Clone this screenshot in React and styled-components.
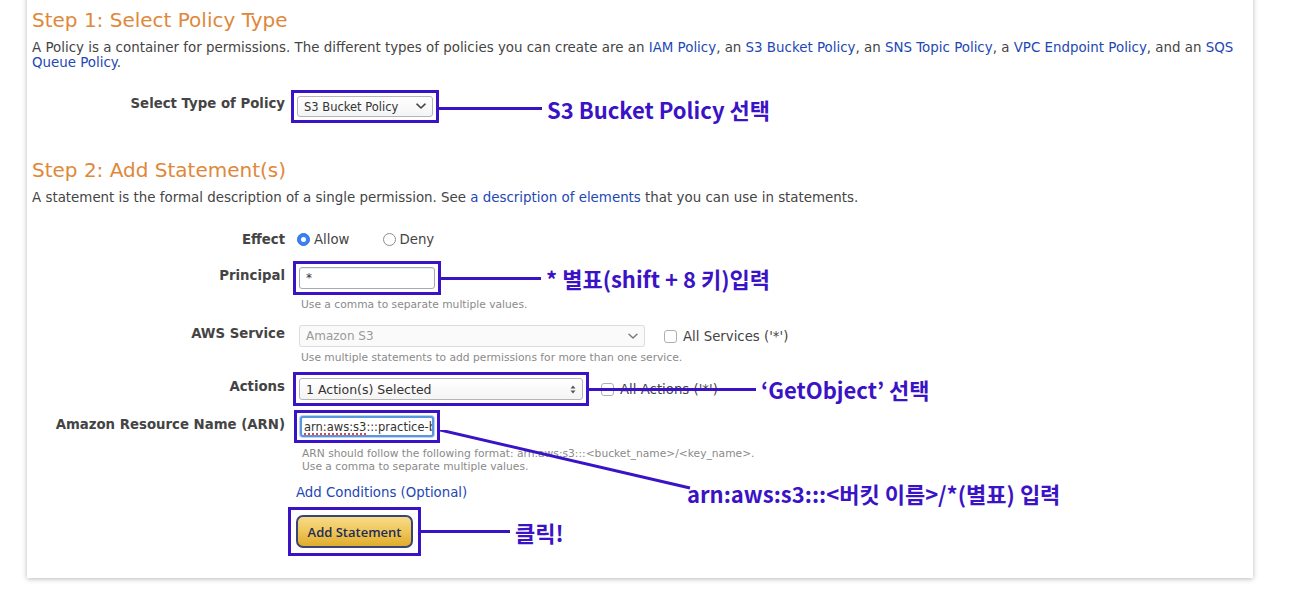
import React from "react";
import styled, { createGlobalStyle } from "styled-components";

const PURPLE = "#3b13c6";

const Global = createGlobalStyle`
  html, body { margin: 0; padding: 0; background: #ffffff; }
  body { font-family: "DejaVu Sans", Verdana, sans-serif; color: #444; overflow: hidden; }
`;

const Page = styled.div`
  width: 1308px;
  height: 600px;
  padding-left: 27px;
  box-sizing: border-box;
  overflow: hidden;
`;

const Card = styled.div`
  width: 1226px;
  margin-top: -20px;
  padding: 28px 5px 30px 5px;
  box-sizing: border-box;
  background: #fff;
  box-shadow: 0 1px 5px rgba(0, 0, 0, 0.28);
`;

const StepTitle = styled.h2`
  margin: ${(p) => p.$mt || 0}px 0 0;
  font-size: 20px;
  line-height: 24px;
  font-weight: normal;
  color: #e0883a;
`;

const Para = styled.p`
  margin: 8px 0 0;
  font-size: 13.4px;
  line-height: 15px;
  color: #444;
`;

const Link = styled.a`
  color: #1e47b4;
  text-decoration: none;
`;

const Form = styled.div`
  display: flex;
  flex-direction: column;
  margin-top: ${(p) => p.$mt}px;
`;

const Row = styled.div`
  display: grid;
  grid-template-columns: 253px 1fr;
  column-gap: ${(p) => p.$gap ?? 12}px;
  margin-top: ${(p) => p.$mt || 0}px;
`;

const Label = styled.div`
  text-align: right;
  font-weight: bold;
  font-size: 13.3px;
  line-height: 15px;
  padding-top: ${(p) => p.$pt ?? 1}px;
  color: #444;
`;

const Control = styled.div`
  display: flex;
  flex-direction: column;
  align-items: flex-start;
`;

const Inline = styled.div`
  display: flex;
  align-items: center;
`;

const Hint = styled.div`
  font-size: 10.7px;
  line-height: 13px;
  color: #8a8a8a;
  margin-top: ${(p) => p.$mt || 0}px;
  margin-left: 2px;
`;

const Highlight = styled.div`
  position: relative;
  display: inline-flex;
  outline: 3px solid ${PURPLE};
  outline-offset: ${(p) => p.$off ?? 3}px;
`;

const Callout = styled.div`
  position: absolute;
  left: calc(100% + ${(p) => p.$from}px);
  top: calc(50% + ${(p) => p.$dy || 0}px);
  display: flex;
  align-items: center;
  transform: translateY(-50%);
  pointer-events: none;
  z-index: 2;
`;

const Connector = styled.div`
  width: ${(p) => p.$w}px;
  height: 3px;
  background: ${PURPLE};
`;

const Note = styled.span`
  margin-left: 5px;
  font-family: "Noto Sans CJK KR", "Noto Sans", sans-serif;
  font-weight: 700;
  font-size: 22px;
  line-height: 26px;
  color: ${PURPLE};
  white-space: nowrap;
`;

const DiagWrap = styled.div`
  position: absolute;
  left: calc(100% + 6px);
  top: 14px;
  width: 252px;
  height: 62px;
  pointer-events: none;
  z-index: 2;
`;

const DiagNote = styled(Note)`
  position: absolute;
  left: 247px;
  top: 50px;
  margin: 0;
`;

const SelectBox = styled.div`
  box-sizing: border-box;
  width: ${(p) => p.$w}px;
  height: ${(p) => p.$h || 22}px;
  display: flex;
  align-items: center;
  justify-content: space-between;
  padding: 0 6px 0 6px;
  border: 1px solid ${(p) => (p.$disabled ? "#dcdcdc" : "#b5b5b5")};
  border-radius: 3px;
  background: ${(p) => (p.$disabled ? "#fafafa" : "linear-gradient(#ffffff, #f4f4f4)")};
  font-size: ${(p) => p.$fs || 12}px;
  color: ${(p) => (p.$disabled ? "#9a9a9a" : "#333")};
`;

const TextInput = styled.div`
  box-sizing: border-box;
  width: ${(p) => p.$w}px;
  height: ${(p) => p.$h || 22}px;
  display: flex;
  align-items: center;
  padding: 0 ${(p) => (p.$focus ? 2 : 6)}px;
  border: ${(p) => (p.$focus ? "2px solid #5b95e0" : "1px solid #a9a9a9")};
  border-radius: 3px;
  background: #fff;
  font-size: ${(p) => p.$fs || 12}px;
  color: #333;
  overflow: hidden;
  white-space: nowrap;
  box-shadow: ${(p) => (p.$focus ? "0 0 0 1px #b9d3f5" : "inset 0 1px 1px rgba(0,0,0,0.08)")};
`;

const Squiggle = styled.span`
  text-decoration: underline dotted #e0463c;
  text-underline-offset: 3px;
  text-decoration-thickness: 2px;
`;

const Radio = styled.span`
  box-sizing: border-box;
  width: 13px;
  height: 13px;
  border-radius: 50%;
  display: inline-flex;
  align-items: center;
  justify-content: center;
  border: 1px solid ${(p) => (p.$checked ? "#2f6fe0" : "#8d8d8d")};
  background: ${(p) => (p.$checked ? "#3b82f0" : "#fff")};
  &::after {
    content: "";
    width: 5px;
    height: 5px;
    border-radius: 50%;
    background: ${(p) => (p.$checked ? "#fff" : "transparent")};
  }
`;

const Check = styled.span`
  box-sizing: border-box;
  width: 13px;
  height: 13px;
  border-radius: 3px;
  border: 1px solid #b0b0b0;
  background: #fff;
  display: inline-block;
  margin-left: ${(p) => p.$ml || 0}px;
`;

const OptText = styled.span`
  font-size: 13.3px;
  line-height: 15px;
  color: #444;
  margin-left: ${(p) => p.$ml || 4}px;
  margin-right: ${(p) => p.$mr || 0}px;
`;

const CondLink = styled(Link)`
  font-size: 13.3px;
  line-height: 16px;
`;

const GoldButton = styled.button`
  box-sizing: border-box;
  width: 117px;
  height: 33px;
  border: 2px solid #3a4577;
  border-radius: 7px;
  background: linear-gradient(#f7dc8a, #efc659 50%, #e0ac2c);
  font-family: "Open Sans", "DejaVu Sans", sans-serif;
  font-weight: 600;
  font-size: 13px;
  color: #232c58;
  padding: 0;
  cursor: pointer;
`;

const Chevron = () => (
  <svg width="10" height="7" viewBox="0 0 10 7">
    <path d="M1 1.2 L5 5 L9 1.2" fill="none" stroke="#444" strokeWidth="1.6" strokeLinecap="round" strokeLinejoin="round" />
  </svg>
);

const DimChevron = () => (
  <svg width="10" height="7" viewBox="0 0 10 7">
    <path d="M1 1.2 L5 5 L9 1.2" fill="none" stroke="#777" strokeWidth="1.4" strokeLinecap="round" strokeLinejoin="round" />
  </svg>
);

const UpDown = () => (
  <svg width="6" height="9" viewBox="0 0 6 9">
    <path d="M0.5 3.5 L3 0.5 L5.5 3.5 Z M0.5 5.5 L3 8.5 L5.5 5.5 Z" fill="#555" />
  </svg>
);

export default function App() {
  return (
    <>
      <Global />
      <Page>
        <Card>
          <StepTitle>Step 1: Select Policy Type</StepTitle>
          <Para>
            A Policy is a container for permissions. The different types of policies you can create are an{" "}
            <Link>IAM Policy</Link>, an <Link>S3 Bucket Policy</Link>, an <Link>SNS Topic Policy</Link>, a{" "}
            <Link>VPC Endpoint Policy</Link>, and an <Link>SQS Queue Policy</Link>.
          </Para>

          <Form $mt={26}>
            <Row>
              <Label $pt={0}>Select Type of Policy</Label>
              <Control>
                <Highlight>
                  <SelectBox $w={136} $h={21} $fs={11.5}>
                    <span>S3 Bucket Policy</span>
                    <Chevron />
                  </SelectBox>
                  <Callout $from={6} $dy={2}>
                    <Connector $w={103} />
                    <Note>S3 Bucket Policy 선택</Note>
                  </Callout>
                </Highlight>
              </Control>
            </Row>
          </Form>

          <StepTitle $mt={41}>Step 2: Add Statement(s)</StepTitle>
          <Para>
            A statement is the formal description of a single permission. See <Link>a description of elements</Link> that
            you can use in statements.
          </Para>

          <Form $mt={27}>
            <Row>
              <Label $pt={0}>Effect</Label>
              <Inline>
                <Radio $checked />
                <OptText $mr={33}>Allow</OptText>
                <Radio />
                <OptText>Deny</OptText>
              </Inline>
            </Row>

            <Row $mt={20} $gap={14}>
              <Label>Principal</Label>
              <Control>
                <Highlight>
                  <TextInput $w={136}>*</TextInput>
                  <Callout $from={6} $dy={0}>
                    <Connector $w={100} />
                    <Note>* 별표(shift + 8 키)입력</Note>
                  </Callout>
                </Highlight>
                <Hint $mt={9}>Use a comma to separate multiple values.</Hint>
              </Control>
            </Row>

            <Row $mt={14} $gap={14}>
              <Label>AWS Service</Label>
              <Control>
                <Inline>
                  <SelectBox $w={346} $disabled>
                    <span>Amazon S3</span>
                    <DimChevron />
                  </SelectBox>
                  <Check $ml={19} />
                  <OptText $ml={6}>All Services ('*')</OptText>
                </Inline>
                <Hint $mt={4}>Use multiple statements to add permissions for more than one service.</Hint>
              </Control>
            </Row>

            <Row $mt={14} $gap={14}>
              <Label>Actions</Label>
              <Control>
                <Inline>
                  <Highlight>
                    <SelectBox $w={284} $fs={12.5}>
                      <span>1 Action(s) Selected</span>
                      <UpDown />
                    </SelectBox>
                    <Callout $from={5} $dy={0}>
                      <Connector $w={168} />
                      <Note>‘GetObject’ 선택</Note>
                    </Callout>
                  </Highlight>
                  <Check $ml={18} />
                  <OptText $ml={6}>All Actions ('*')</OptText>
                </Inline>
              </Control>
            </Row>

            <Row $mt={16} $gap={15}>
              <Label>Amazon Resource Name (ARN)</Label>
              <Control>
                <Highlight>
                  <TextInput $w={134} $h={21} $fs={11.5} $focus>
                    <Squiggle>arn:aws:s3</Squiggle>:::practice-bu
                  </TextInput>
                  <DiagWrap>
                    <svg width="252" height="62" viewBox="0 0 252 62">
                      <line x1="0" y1="0" x2="250" y2="58" stroke={PURPLE} strokeWidth="3" />
                    </svg>
                    <DiagNote>arn:aws:s3:::&lt;버킷 이름&gt;/*(별표) 입력</DiagNote>
                  </DiagWrap>
                </Highlight>
                <Hint $mt={10}>
                  ARN should follow the following format: arn:aws:s3:::&lt;bucket_name&gt;/&lt;key_name&gt;.
                  <br />
                  Use a comma to separate multiple values.
                </Hint>
              </Control>
            </Row>

            <Row $mt={12} $gap={11}>
              <span />
              <Control>
                <CondLink>Add Conditions (Optional)</CondLink>
              </Control>
            </Row>

            <Row $mt={14} $gap={11}>
              <span />
              <Control>
                <Highlight $off={5}>
                  <GoldButton>Add Statement</GoldButton>
                  <Callout $from={8} $dy={0}>
                    <Connector $w={89} />
                    <Note>클릭!</Note>
                  </Callout>
                </Highlight>
              </Control>
            </Row>
          </Form>
        </Card>
      </Page>
    </>
  );
}
